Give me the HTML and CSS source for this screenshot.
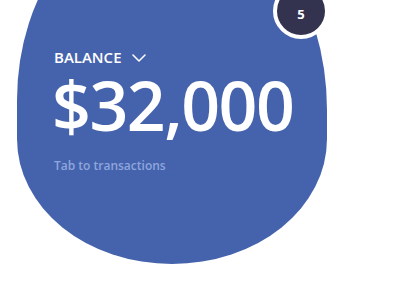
FILE: index.html
```html
<!DOCTYPE html>
<html>
<head>
<meta charset="utf-8">
<link rel="stylesheet" href="styles.css">
</head>
<body>
<div class="screen">
  <div class="blob">
    <div class="label">
      <span>BALANCE</span>
      <svg class="chevron" width="14" height="8" viewBox="0 0 14 8"><path d="M1 1 L7 7 L13 1" fill="none" stroke="#fff" stroke-width="1.5" stroke-linecap="round" stroke-linejoin="round"/></svg>
    </div>
    <div class="amount">$32,000</div>
    <div class="hint">Tab to transactions</div>
  </div>
  <div class="badge">5</div>
</div>
</body>
</html>
```
FILE: styles.css
```css
html, body {
  margin: 0;
  padding: 0;
  background: #fff;
  overflow: hidden;
}
.screen {
  position: relative;
  width: 400px;
  height: 300px;
  overflow: hidden;
  font-family: "Open Sans", "Noto Sans", sans-serif;
}
.blob {
  box-sizing: border-box;
  margin-left: 17px;
  margin-top: -100px;
  width: 310px;
  height: 364px;
  padding: 147px 0 0 37px;
  background: #4563ad;
  border-radius: 155px 155px 155px 155px / 200px 210px 125px 125px;
  color: #fff;
}
.label {
  display: flex;
  align-items: center;
  gap: 10px;
  font-size: 15px;
  font-weight: 600;
  line-height: 20px;
}
.chevron {
  margin-top: 1px;
}
.amount {
  margin-top: -2px;
  font-size: 68px;
  font-weight: 600;
  line-height: 80px;
  letter-spacing: -1.5px;
  margin-left: -2px;
}
.hint {
  margin-top: 12px;
  font-size: 12px;
  font-weight: 600;
  line-height: 18px;
  color: #8fa6dd;
}
.badge {
  position: absolute;
  left: 273px;
  top: -17px;
  width: 48px;
  height: 42px;
  padding-top: 6px;
  border: 4px solid #fff;
  border-radius: 50%;
  background: #34334f;
  color: #fff;
  font-size: 13px;
  font-weight: 700;
  line-height: 20px;
  display: flex;
  align-items: center;
  justify-content: center;
}
```
